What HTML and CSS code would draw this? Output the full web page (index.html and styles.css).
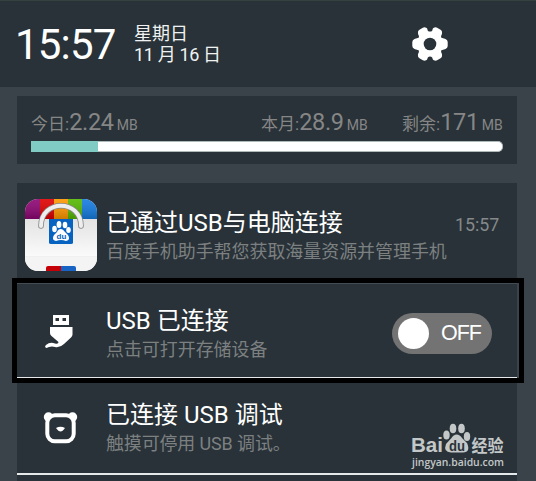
FILE: index.html
```html
<!DOCTYPE html>
<html lang="zh-CN">
<head>
<meta charset="utf-8">
<title>通知</title>
<link rel="stylesheet" href="styles.css">
</head>
<body>
<header class="header">
  <div class="clock">15:57</div>
  <div class="date"><div>星期日</div><div class="day">11 月 16 日</div></div>
  <svg class="gear" width="36" height="36" viewBox="-18 -18 36 36">
    <g fill="#fff"><circle r="12.500"/>
      <path id="teeth" d="M-10-7L-15.500-5Q-17.700-4-17.700-2V2Q-17.700 4-15.500 5L-10 7H10L15.500 5Q17.700 4 17.700 2V-2Q17.700-4 15.500-5L10-7Z"/>
      <use href="#teeth" transform="rotate(60)"/><use href="#teeth" transform="rotate(120)"/>
    </g>
    <g fill="#283238"><circle r="6.300"/><circle cx="0" cy="-15" r="2.600"/><circle cx="0" cy="15" r="2.600"/><circle cx="13.200" cy="-7.700" r="2"/><circle cx="13.200" cy="7.700" r="2"/><circle cx="-13.200" cy="-7.700" r="2"/><circle cx="-13.200" cy="7.700" r="2"/></g>
  </svg>
</header>
<section class="usage">
  <div class="stats">
    <div class="stat today">今日:<b>2.24</b><small>MB</small></div>
    <div class="stat month">本月:<b>28.9</b><small>MB</small></div>
    <div class="stat left">剩余:<b>171</b><small>MB</small></div>
  </div>
  <div class="bar"><div class="fill"></div></div>
</section>
<main class="list">
  <article class="row first">
    <div class="icon">
      <svg width="74" height="74" viewBox="0 0 74 74">
        <defs>
          <clipPath id="round"><rect x="1" y="1" width="72" height="72" rx="13"/></clipPath>
          <linearGradient id="bag" x2="0" y2="1"><stop stop-color="#e3e3e3"/><stop offset="1" stop-color="#fafafa"/></linearGradient>
          <linearGradient id="shade" x2="0" y2="1"><stop stop-color="#fff" stop-opacity=".1"/><stop offset="1" stop-color="#000" stop-opacity=".2"/></linearGradient>
        </defs>
        <g clip-path="url(#round)">
          <path fill="#f0f0f0" d="M0 0H74V74H0z"/>
          <path fill="#8d0573" d="M0 0H16V21H0z"/><path fill="#df0000" d="M16 0H30V21H16z"/><path fill="#ff9800" d="M30 0H44V21H30z"/><path fill="#56b900" d="M44 0H58V21H44z"/><path fill="#147ce0" d="M58 0H74V21H58z"/>
          <path fill="url(#shade)" d="M0 0H74V21H0z"/>
          <path fill="url(#bag)" d="M0 21H74V58H0z"/><path fill="#f4f4f4" d="M0 59H74V74H0z"/>
        </g>
        <path d="M25 21H49V44.500Q49 46 47 46H27Q25 46 25 44.500z" fill="#0862c0"/>
        <path d="M17 28C17 1 57 1 57 28" fill="none" stroke="#888" stroke-width="5.600" stroke-linecap="round"/>
        <path d="M17 28C17 1 57 1 57 28" fill="none" stroke="#eee" stroke-width="4" stroke-linecap="round"/>
        <g fill="#fff"><ellipse cx="30.500" cy="31" rx="2.300" ry="3.200"/><ellipse cx="35" cy="26.500" rx="2.400" ry="3.500"/><ellipse cx="41" cy="27" rx="2.300" ry="3.300"/><ellipse cx="44.500" cy="32" rx="2.300" ry="3"/><path d="M37 31Q39 31 41 34L44 37Q47 42 42 43Q37 41 32 43Q27 42 30 37L33 34Q34 31 37 31z"/></g>
        <text x="32.500" y="41" class="du small-du">du</text>
        <path fill="#c50006" d="M22 73V70Q22 68 24 68H37V73z"/><path fill="#1764c5" d="M37 68H50Q52 68 52 70V73H37z"/>
      </svg>
    </div>
    <div class="copy"><h2>已通过USB与电脑连接</h2><p>百度手机助手帮您获取海量资源并管理手机</p></div>
    <time>15:57</time>
  </article>
  <article class="row usb">
    <div class="icon">
      <svg width="32" height="36" viewBox="0 0 32 36">
        <path fill="#fff" fill-rule="evenodd" d="M9 1H25V11H9zM11.500 4V7H15V4zM18.500 4V7H22V4z"/>
        <path fill="#fff" d="M6 13H28.500V20.500Q28.500 22 27 23.500L20 30Q16 34 11 33Q8 31.800 5 33L2.500 34Q0 33 2 31Q6 27.500 11 29.500Q14.500 30.500 14.500 28L7.500 22Q6 21 6 19z"/>
      </svg>
    </div>
    <div class="copy"><h2>USB 已连接</h2><p>点击可打开存储设备</p></div>
    <div class="toggle"><span class="knob"></span><span>OFF</span></div>
  </article>
  <article class="row debug">
    <div class="icon">
      <svg width="36" height="34" viewBox="0 0 36 34">
        <circle cx="5.500" cy="6" r="4.700" fill="#fff"/><circle cx="29.500" cy="6" r="4.700" fill="#fff"/>
        <rect x="4.300" y="4.300" width="26.400" height="26" rx="7.500" fill="#283238" stroke="#fff" stroke-width="4"/>
        <path fill="#fff" d="M13 17Q17.500 14.500 22 17Q19.500 20.500 17.500 20.500Q15.500 20.500 13 17z"/>
      </svg>
    </div>
    <div class="copy"><h2>已连接 USB 调试</h2><p>触摸可停用 USB 调试。</p></div>
  </article>
</main>
<div class="highlight"></div>
<svg class="watermark" width="98" height="54" viewBox="0 0 98 54">
  <g fill="#c3c7c8">
    <text class="logo" x="1" y="31" textLength="32" lengthAdjust="spacingAndGlyphs">Bai</text>
    <ellipse cx="36.500" cy="14" rx="3.200" ry="4.500"/><ellipse cx="43" cy="7.500" rx="3.300" ry="4.800"/><ellipse cx="51.500" cy="7.500" rx="3.300" ry="4.800"/><ellipse cx="57" cy="15.500" rx="3.200" ry="4.500"/>
    <path d="M46.500 13.500Q50 13.500 52 17L57 22Q61 31 53 31.500H41Q33 31 36 23L41.500 17Q43.500 13.500 46.500 13.500z"/>
    <text class="cn" x="61.500" y="30.500" textLength="32" lengthAdjust="spacingAndGlyphs">经验</text>
    <text class="site" x="2" y="44.500" textLength="92" lengthAdjust="spacingAndGlyphs">jingyan.baidu.com</text>
  </g>
  <text class="du" x="39" y="29.500" textLength="16" lengthAdjust="spacingAndGlyphs">du</text>
</svg>
</body>
</html>
```

FILE: styles.css
```css
* { box-sizing: border-box; }
body {
  margin: 0;
  width: 536px;
  height: 481px;
  overflow: hidden;
  position: relative;
  background: #3b434a;
  color: #fff;
  font-family: Roboto, "Noto Sans CJK SC", sans-serif;
}
svg { display: block; flex: none; }
.header {
  height: 87px;
  display: flex;
  align-items: center;
  background: #283238;
  border-top: 1px solid #33413f;
  padding-left: 15px;
}
.clock { width: 119px; font-size: 42px; line-height: 50px; letter-spacing: -0.8px; padding-top: 2px; }
.date { width: 278px; font-size: 18px; line-height: 21px; color: #f0f2f2; }
.day { letter-spacing: -0.35px; }
.usage { margin: 9px 19px 0 17px; height: 68px; background: #283238; padding: 12px 14px 0; }
.stats { display: flex; height: 33px; color: #868686; }
.stat { font-size: 17px; line-height: 28px; white-space: nowrap; }
.stat b { font-size: 23.500px; font-weight: 400; letter-spacing: -.3px; }
.stat small { font-size: 14px; margin-left: 3px; }
.today { width: 230px; }
.month { width: 141px; }
.bar { height: 11px; background: #fff; border: 1px solid #aeb9ba; border-left: 0; border-radius: 0 5px 5px 0; }
.fill { width: 67px; height: 11px; margin-top: -1px; background: #80cbc4; }
.list { margin: 19px 19px 0 17px; }
.row { display: flex; height: 95px; background: #283238; border-bottom: 2px solid #e5e9ea; }
.first { height: 101px; border-bottom: 1px solid #424c52; }
.icon { width: 89px; flex: none; }
.first .icon { padding: 15px 0 0 7px; }
.usb .icon { padding: 30px 0 0 27px; }
.debug .icon { padding: 32px 0 0 26px; }
.copy { width: 349px; flex: none; padding-top: 22px; white-space: nowrap; }
.first .copy { padding-top: 25px; }
.debug .copy { padding-top: 21px; }
h2 { font-size: 24px; line-height: 30px; font-weight: 400; margin: 0; }
p { font-size: 17.950px; line-height: 28px; margin: 0; color: #7d8081; }
.debug p { letter-spacing: -.1px; }
time { font-size: 17.800px; line-height: 24px; padding-top: 30px; color: #85898a; }
.usb .copy { width: 286px; }
.toggle {
  width: 100px;
  height: 41px;
  margin-top: 29px;
  border-radius: 21px;
  background: #737373;
  display: flex;
  align-items: center;
  padding-left: 6px;
  font: 21.500px "Liberation Sans", sans-serif;
  letter-spacing: -1px;
}
.knob { width: 31px; height: 31px; border-radius: 50%; background: #fff; margin-right: 12px; }
.debug { height: 96px; }
.list::after { content: ""; display: block; height: 6px; background: #283238; }
/* emphasis frame over the USB row */
.highlight { position: absolute; left: 12px; top: 278px; width: 512px; height: 105px; border: 5px solid #000; }
.watermark { position: absolute; left: 410px; top: 421px; }
.logo { font: bold 21px "Liberation Sans", sans-serif; }
.cn { font: bold 16.500px "Noto Sans CJK SC", sans-serif; }
.site { font: 600 11px "Open Sans", sans-serif; }
.du { font: bold 14px "Liberation Sans", sans-serif; fill: #283238; }
.small-du { font-size: 8px; fill: #0862c0; }
```
